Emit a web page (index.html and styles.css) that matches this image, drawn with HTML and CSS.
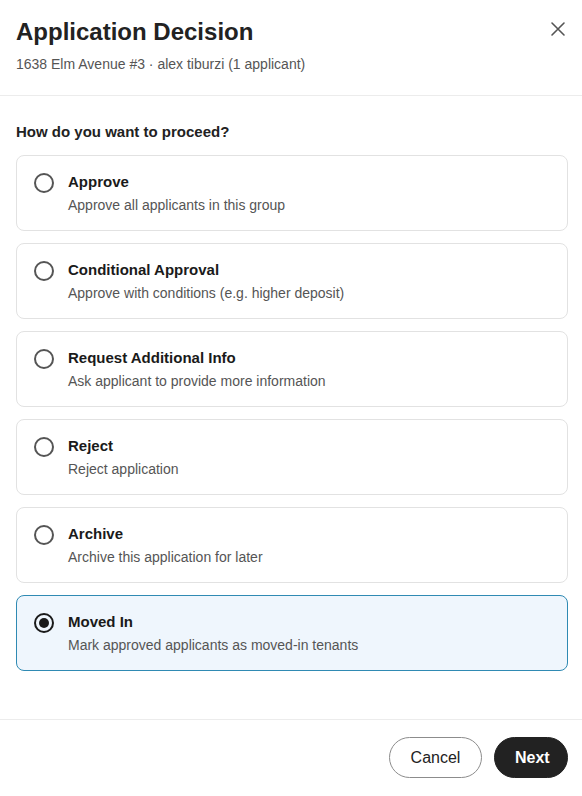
FILE: index.html
```html
<!DOCTYPE html>
<html lang="en">
<head>
<meta charset="utf-8">
<title>Application Decision</title>
<link rel="stylesheet" href="styles.css">
</head>
<body>
<div class="dialog">
  <header class="dialog-header">
    <div class="heading">
      <h1 class="title">Application Decision</h1>
      <p class="subtitle">1638 Elm Avenue #3 · alex tiburzi (1 applicant)</p>
    </div>
    <button class="close" aria-label="Close">
      <svg width="16" height="16" viewBox="0 0 16 16" fill="none" stroke="#555" stroke-width="1.6" stroke-linecap="round"><path d="M2 2L14 14M14 2L2 14"/></svg>
    </button>
  </header>

  <section class="dialog-body">
    <h2 class="question">How do you want to proceed?</h2>
    <div class="options">
      <label class="option">
        <span class="radio"></span>
        <span class="option-text">
          <span class="option-title">Approve</span>
          <span class="option-desc">Approve all applicants in this group</span>
        </span>
      </label>
      <label class="option">
        <span class="radio"></span>
        <span class="option-text">
          <span class="option-title">Conditional Approval</span>
          <span class="option-desc">Approve with conditions (e.g. higher deposit)</span>
        </span>
      </label>
      <label class="option">
        <span class="radio"></span>
        <span class="option-text">
          <span class="option-title">Request Additional Info</span>
          <span class="option-desc">Ask applicant to provide more information</span>
        </span>
      </label>
      <label class="option">
        <span class="radio"></span>
        <span class="option-text">
          <span class="option-title">Reject</span>
          <span class="option-desc">Reject application</span>
        </span>
      </label>
      <label class="option">
        <span class="radio"></span>
        <span class="option-text">
          <span class="option-title">Archive</span>
          <span class="option-desc">Archive this application for later</span>
        </span>
      </label>
      <label class="option selected">
        <span class="radio checked"></span>
        <span class="option-text">
          <span class="option-title">Moved In</span>
          <span class="option-desc">Mark approved applicants as moved-in tenants</span>
        </span>
      </label>
    </div>
  </section>

  <footer class="dialog-footer">
    <button class="btn btn-secondary">Cancel</button>
    <button class="btn btn-primary">Next</button>
  </footer>
</div>
</body>
</html>
```

FILE: styles.css
```css
* { box-sizing: border-box; }

html, body {
  margin: 0;
  padding: 0;
  background: #fff;
}

body {
  font-family: "Liberation Sans", Arial, sans-serif;
  color: #1f1f1f;
}

.dialog {
  width: 582px;
  height: 796px;
  display: flex;
  flex-direction: column;
}

.dialog-header {
  display: flex;
  justify-content: space-between;
  align-items: flex-start;
  padding: 17px 16px 0 16px;
  height: 96px;
  border-bottom: 1px solid #ececec;
}

.title {
  margin: 0;
  font-size: 24px;
  line-height: 30px;
  font-weight: 700;
  color: #222;
}

.subtitle {
  margin: 8px 0 0;
  font-size: 14px;
  line-height: 18px;
  color: #555;
}

.close {
  border: 0;
  background: none;
  padding: 0;
  margin: 2px -2px 0 0;
  width: 20px;
  height: 20px;
  display: flex;
  align-items: center;
  justify-content: center;
}

.dialog-body {
  flex: 1;
  padding: 25px 14px 0 16px;
}

.question {
  margin: 0 0 12px;
  font-size: 15px;
  line-height: 22px;
  font-weight: 700;
  color: #222;
}

.options {
  display: flex;
  flex-direction: column;
  gap: 12px;
}

.option {
  display: flex;
  align-items: flex-start;
  gap: 14px;
  height: 76px;
  padding: 16px 17px 14px;
  border: 1px solid #e2e2e2;
  border-radius: 8px;
  background: #fff;
}

.option.selected {
  border-color: #2f8ab3;
  background: #eff6fd;
}

.radio {
  flex: none;
  width: 20px;
  height: 20px;
  margin-top: 1px;
  border: 2px solid #555;
  border-radius: 50%;
  display: flex;
  align-items: center;
  justify-content: center;
}

.radio.checked {
  border-color: #1a1a1a;
}

.radio.checked::after {
  content: "";
  width: 10px;
  height: 10px;
  border-radius: 50%;
  background: #1a1a1a;
}

.option-text {
  display: flex;
  flex-direction: column;
  gap: 4px;
}

.option-title {
  font-size: 15px;
  line-height: 20px;
  font-weight: 700;
  color: #1a1a1a;
}

.option-desc {
  font-size: 14px;
  line-height: 18px;
  color: #555;
}

.dialog-footer {
  display: flex;
  justify-content: flex-end;
  align-items: flex-start;
  gap: 12px;
  height: 77px;
  padding: 17px 14px 0 16px;
  border-top: 1px solid #ececec;
}

.btn {
  height: 41px;
  border-radius: 999px;
  font-family: inherit;
  font-size: 16px;
  padding: 0 20px;
  cursor: pointer;
}

.btn-secondary {
  background: #fff;
  color: #222;
  border: 1px solid #8c8c8c;
  width: 93px;
}

.btn-primary {
  background: #222;
  color: #fff;
  border: 1px solid #222;
  font-weight: 700;
  width: 74px;
}
```
